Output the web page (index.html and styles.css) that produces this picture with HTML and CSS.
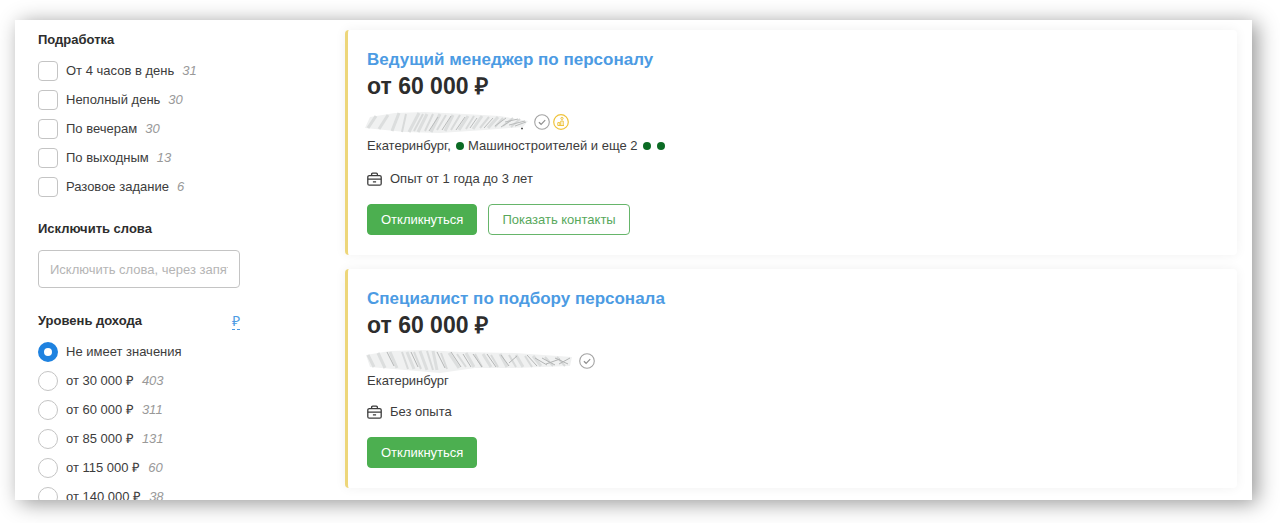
FILE: index.html
```
<!DOCTYPE html>
<html lang="ru">
<head>
    <meta charset="UTF-8">
    <meta name="viewport" content="width=device-width, initial-scale=1.0">
    <title>Вакансии</title>
    <link rel="stylesheet" href="styles.css">
</head>
<body>
    <svg class="defs" width="0" height="0" aria-hidden="true">
        <defs>
            <filter id="soft"><feGaussianBlur stdDeviation="0.7"/></filter>
            <symbol id="check" viewBox="0 0 16 16">
                <circle cx="8" cy="8" r="7.3" fill="none" stroke="#a3a3a3" stroke-width="1.1"/>
                <path d="M4.9 8.2 7.1 10.3 11.2 6.2" fill="none" stroke="#8f8f8f" stroke-width="1.2"/>
            </symbol>
            <symbol id="case" viewBox="0 0 16 16">
                <rect x="0.8" y="4.6" width="13.4" height="9.6" rx="1.5"/>
                <path d="M4.6 4.6V3.2Q4.6 2.1 5.7 2.1H9.3Q10.4 2.1 10.4 3.2V4.6M0.8 8.2H14.2M5.9 10.9H9.1"/>
            </symbol>
        </defs>
    </svg>

    <div class="page">
        <aside class="filters">
            <fieldset class="filter">
                <legend class="filter-title">Подработка</legend>
                <div class="options">
                    <label class="option"><input type="checkbox" name="part"><span>От 4 часов в день</span><i>31</i></label>
                    <label class="option"><input type="checkbox" name="part"><span>Неполный день</span><i>30</i></label>
                    <label class="option"><input type="checkbox" name="part"><span>По вечерам</span><i>30</i></label>
                    <label class="option"><input type="checkbox" name="part"><span>По выходным</span><i>13</i></label>
                    <label class="option"><input type="checkbox" name="part"><span>Разовое задание</span><i>6</i></label>
                </div>
            </fieldset>

            <div class="filter">
                <label class="filter-title" for="exclude">Исключить слова</label>
                <input class="text-input" type="text" id="exclude" placeholder="Исключить слова, через запятую">
            </div>

            <div class="filter" role="group" aria-labelledby="income">
                <div class="filter-head">
                    <span class="filter-title" id="income">Уровень дохода</span>
                    <a class="currency" href="#">₽</a>
                </div>
                <div class="options">
                    <label class="option"><input type="radio" name="income" checked><span>Не имеет значения</span></label>
                    <label class="option"><input type="radio" name="income"><span>от 30 000 ₽</span><i>403</i></label>
                    <label class="option"><input type="radio" name="income"><span>от 60 000 ₽</span><i>311</i></label>
                    <label class="option"><input type="radio" name="income"><span>от 85 000 ₽</span><i>131</i></label>
                    <label class="option"><input type="radio" name="income"><span>от 115 000 ₽</span><i>60</i></label>
                    <label class="option"><input type="radio" name="income"><span>от 140 000 ₽</span><i>38</i></label>
                </div>
            </div>
        </aside>

        <main class="vacancies">
            <article class="card">
                <h2 class="card-title"><a href="#">Ведущий менеджер по персоналу</a></h2>
                <p class="salary">от 60 000 ₽</p>
                <div class="company">
                    <svg class="smudge" width="164" height="24" viewBox="0 0 164 24" aria-hidden="true">
                        <g filter="url(#soft)" fill="none">
                            <path d="M0 18 5 7 30 3 60 2 100 4 135 6 163 11 158 17 120 20 75 23 40 22Z" fill="#f0f1f1"/>
                            <path d="M3 18 11 6M14 19 23 5M27 21 34 3M44 22 54 3M53 22 62 4M66 22 75 4M80 21 88 5M94 20 103 6M108 19 117 6M123 18 133 7" stroke="#dcdede" stroke-width="3"/>
                            <path d="M37 22 41 4M49 21 58 4M60 21 68 4M72 20 81 5M86 20 95 5M101 19 109 6M115 18 124 7M130 17 138 8M138 16 148 8M146 17 155 9" stroke="#d8dada" stroke-width="2"/>
                            <path d="M64 21 73 7M77 20 86 6M91 20 100 7M105 18 112 8M119 18 128 8M130 16 141 8M136 17 147 10M140 12 153 9M144 15 160 11M150 16 161 12" stroke="#b9bbbb" stroke-width="1"/>
                        </g>
                        <path d="M156 18.5H158" stroke="#555" stroke-width="1.5"/>
                    </svg>
                    <svg class="badge" role="img" aria-label="Проверено"><use href="#check"/></svg>
                    <svg class="badge" viewBox="0 0 16 16" fill="none" stroke="#efc33c" role="img" aria-label="Рейтинг">
                        <circle cx="8" cy="8" r="7.3" stroke-width="1.2"/>
                        <circle cx="9" cy="4.4" r="1.1"/>
                        <path d="M4.8 8.6H6.8V11.5H4.8ZM7.8 7H10.2V11.5H7.8ZM6 11.5H11"/>
                    </svg>
                </div>
                <p class="place place-metro">Екатеринбург, <span class="dot"></span> Машиностроителей и еще 2 <span class="dot"></span> <span class="dot"></span></p>
                <p class="experience"><svg class="case" aria-hidden="true"><use href="#case"/></svg>Опыт от 1 года до 3 лет</p>
                <div class="actions">
                    <button type="button" class="btn btn-main">Откликнуться</button>
                    <button type="button" class="btn">Показать контакты</button>
                </div>
            </article>

            <article class="card">
                <h2 class="card-title"><a href="#">Специалист по подбору персонала</a></h2>
                <p class="salary">от 60 000 ₽</p>
                <div class="company">
                    <svg class="smudge" width="209" height="26" viewBox="0 0 209 26" aria-hidden="true">
                        <g filter="url(#soft)" fill="none">
                            <path d="M1 7 25 3 60 2 95 4 150 5 207 9 205 18 150 20 110 20 75 25 40 22 5 19Z" fill="#f0f1f1"/>
                            <path d="M3 7 9 19M13 5 20 20M25 4 32 20M42 4 49 21M55 3 62 22M68 3 72 22M84 5 94 20M101 5 109 19M118 6 126 19M135 6 142 19M151 7 158 19M168 8 176 18" stroke="#dcdede" stroke-width="3"/>
                            <path d="M37 4 43 21M49 4 56 21M62 3 68 22M76 5 82 21M92 6 101 19M110 6 117 19M126 7 133 19M144 7 151 19M160 8 167 19M180 9 188 18M192 9 200 18" stroke="#d8dada" stroke-width="2"/>
                            <path d="M22 4 29 18M46 4 53 19M72 4 80 20M86 4 96 19M98 6 106 19M108 6 117 19M122 6 131 19M136 7 144 18M144 15 152 8M162 7 172 18M170 10 182 17M177 10 190 17M181 16 195 11M190 10 203 16M194 16 205 10" stroke="#b3b5b5" stroke-width="1"/>
                        </g>
                    </svg>
                    <svg class="badge" role="img" aria-label="Проверено"><use href="#check"/></svg>
                </div>
                <p class="place">Екатеринбург</p>
                <p class="experience"><svg class="case" aria-hidden="true"><use href="#case"/></svg>Без опыта</p>
                <div class="actions">
                    <button type="button" class="btn btn-main">Откликнуться</button>
                </div>
            </article>
        </main>
    </div>
</body>
</html>
```
FILE: styles.css
```
* {
    box-sizing: border-box;
}

body {
    margin: 0;
    height: 100vh;
    padding: 20px 28px 23px 15px;
    display: flex;
    overflow: hidden;
    background: #fff;
    color: #3c3c3c;
    font-family: "Liberation Sans", Arial, sans-serif;
    font-size: 13px;
    line-height: 20px;
}

h2, p {
    margin: 0;
}

a {
    color: #4c9be3;
    text-decoration: none;
}

.defs {
    position: absolute;
}

.page {
    flex: 1;
    display: flex;
    gap: 105px;
    padding: 10px 15px 0 23px;
    overflow: hidden;
    background: #fff;
    box-shadow: 5px 3px 20px rgba(0, 0, 0, 0.42);
}

/* filters */

.filters {
    flex: 0 0 202px;
}

.filter {
    margin: 0 0 23px;
    padding: 0;
    border: none;
}

.filter-title {
    display: block;
    padding: 0;
    font-weight: bold;
    color: #2d2d2d;
}

.filter-head {
    display: flex;
    justify-content: space-between;
}

.currency {
    height: 19px;
    border-bottom: 1px dashed #4c9be3;
    font-size: 14px;
}

.options {
    display: flex;
    flex-direction: column;
    gap: 10px;
    margin-top: 11px;
}

.option {
    display: flex;
    align-items: center;
    height: 19px;
}

.option input {
    appearance: none;
    width: 20px;
    height: 20px;
    margin: 0 8px 0 0;
    border: 1px solid #c4c4c4;
    border-radius: 4px;
    background: #fff;
}

.option input[type="radio"] {
    border-radius: 50%;
}

.option input[type="radio"]:checked {
    border: 6px solid #1e82e0;
}

.option i {
    margin-left: 8px;
    color: #999;
}

.text-input {
    display: block;
    width: 100%;
    height: 38px;
    margin-top: 11px;
    padding: 0 11px;
    border: 1px solid #c4c4c4;
    border-radius: 4px;
    font: inherit;
}

.text-input::placeholder {
    color: #b5b5b5;
}

/* vacancies */

.vacancies {
    flex: 1;
    display: flex;
    flex-direction: column;
    gap: 14px;
}

.card {
    padding: 19px 19px 20px;
    border-left: 3px solid #edd67a;
    border-radius: 4px;
    background: #fff;
    box-shadow: 0 0 12px rgba(0, 0, 0, 0.06);
}

.card-title {
    font-size: 17px;
    line-height: 22px;
}

.salary {
    font-size: 23px;
    font-weight: bold;
    line-height: 30px;
    color: #2d2d2d;
}

.company {
    display: flex;
    align-items: center;
    gap: 3px;
    height: 20px;
    margin-top: 11px;
}

.smudge {
    margin-left: -2px;
    margin-right: 2px;
}

.badge {
    width: 16px;
    height: 16px;
}

.place-metro {
    line-height: 28px;
}

.place-metro + .experience {
    margin-top: 9px;
}

.dot {
    display: inline-block;
    width: 8px;
    height: 8px;
    margin-left: 2px;
    border-radius: 50%;
    background: #0b6b24;
}

.experience {
    display: flex;
    align-items: center;
    gap: 7px;
    margin-top: 11px;
}

.case {
    width: 16px;
    height: 16px;
    fill: none;
    stroke: #3c3c3c;
    stroke-width: 1.3;
}

.actions {
    display: flex;
    gap: 11px;
    margin-top: 15px;
}

.btn {
    height: 31px;
    padding: 0 13px;
    border: 1px solid #66b56a;
    border-radius: 4px;
    background: #fff;
    color: #58a85c;
    font: inherit;
    cursor: pointer;
}

.btn-main {
    border-color: #4caf50;
    background: #4caf50;
    color: #fff;
}
```
